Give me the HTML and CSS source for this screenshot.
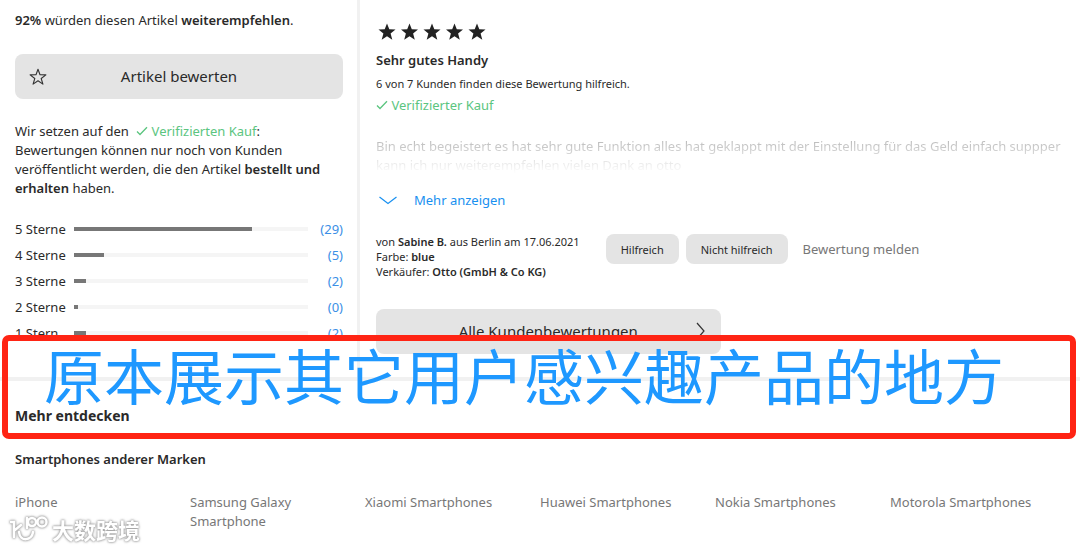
FILE: index.html
```html
<!DOCTYPE html>
<html lang="de">
<head>
<meta charset="utf-8">
<meta name="viewport" content="width=device-width, initial-scale=1">
<title>Kundenbewertungen</title>
<link rel="stylesheet" href="styles.css">
</head>
<body>
<main class="page">
  <div class="reviews">
    <section class="summary">
      <p><b>92%</b> würden diesen Artikel <b>weiterempfehlen</b>.</p>
      <button class="button rate" type="button">
        <svg class="rate-icon" viewBox="0 0 18 18" width="18" height="18" fill="none" stroke="#333" stroke-width="1.1" stroke-linejoin="round"><path d="M9 1.2l2 5.5 5.9.2-4.7 3.6 1.7 5.6L9 12.8l-4.9 3.3 1.7-5.6L1.100 6.900 7 6.700z"/></svg>
        <span>Artikel bewerten</span>
      </button>
      <p class="notice">Wir setzen auf den <span class="verified inline"><svg class="check" viewBox="0 0 12 10" width="12" height="10"><path d="M1 5.500l3 3L11 1.200"/></svg> Verifizierten Kauf</span>: Bewertungen können nur noch von Kunden veröffentlicht werden, die den Artikel <b>bestellt und erhalten</b> haben.</p>
      <ul class="ratings">
        <li><span>5 Sterne</span><span class="track"><span class="fill" style="width:76%"></span></span><a href="#">(29)</a></li>
        <li><span>4 Sterne</span><span class="track"><span class="fill" style="width:13%"></span></span><a href="#">(5)</a></li>
        <li><span>3 Sterne</span><span class="track"><span class="fill" style="width:5%"></span></span><a href="#">(2)</a></li>
        <li><span>2 Sterne</span><span class="track"><span class="fill" style="width:1.500%"></span></span><a href="#">(0)</a></li>
        <li><span>1 Stern</span><span class="track"><span class="fill" style="width:5%"></span></span><a href="#">(2)</a></li>
      </ul>
    </section>
    <article class="review">
      <svg class="stars" viewBox="0 0 110 18" width="110" height="18" fill="#222" role="img" aria-label="5 Sterne">
        <defs><path id="star" d="M9 .5l2.300 5.800 6.200.3-4.900 3.900 1.700 6.200L9 13.200l-5.300 3.500 1.700-6.200L.5 6.600l6.200-.3z"/></defs>
        <use href="#star" x="2"/><use href="#star" x="24.500"/><use href="#star" x="47"/><use href="#star" x="69.500"/><use href="#star" x="92"/>
      </svg>
      <h2>Sehr gutes Handy</h2>
      <p class="small helpful">6 von 7 Kunden finden diese Bewertung hilfreich.</p>
      <p class="verified"><svg class="check" viewBox="0 0 12 10" width="12" height="10"><path d="M1 5.500l3 3L11 1.200"/></svg> Verifizierter Kauf</p>
      <p class="excerpt">Bin echt begeistert es hat sehr gute Funktion alles hat geklappt mit der Einstellung für das Geld einfach suppper kann ich nur weiterempfehlen vielen Dank an otto</p>
      <button class="more" type="button"><svg viewBox="0 0 18 9" width="18" height="9" fill="none" stroke="#1890f0" stroke-width="1.200"><path d="M.5 1L9 7.500 17.500 1"/></svg>Mehr anzeigen</button>
      <div class="meta">
        <p class="small author">von <b>Sabine B.</b> aus Berlin am 17.06.2021<br>Farbe: <b>blue</b><br>Verkäufer: <b>Otto (GmbH &amp; Co KG)</b></p>
        <div class="actions">
          <button class="button vote" type="button">Hilfreich</button>
          <button class="button vote" type="button">Nicht hilfreich</button>
          <a class="report" href="#">Bewertung melden</a>
        </div>
      </div>
      <button class="button all" type="button"><span>Alle Kundenbewertungen</span><svg class="all-icon" viewBox="0 0 9 18" width="9" height="18" fill="none" stroke="#333" stroke-width="1.200"><path d="M1 1l7 8-7 8"/></svg></button>
    </article>
  </div>
  <section class="discover">
    <h2 class="discover-title">Mehr entdecken</h2>
    <h3>Smartphones anderer Marken</h3>
    <nav class="brands">
      <a href="#">iPhone</a>
      <a href="#">Samsung Galaxy Smartphone</a>
      <a href="#">Xiaomi Smartphones</a>
      <a href="#">Huawei Smartphones</a>
      <a href="#">Nokia Smartphones</a>
      <a href="#">Motorola Smartphones</a>
    </nav>
  </section>
  <div class="callout" lang="zh">原本展示其它用户感兴趣产品的地方</div>
  <div class="watermark" lang="zh">
    <svg viewBox="0 0 40 28" width="40" height="28" fill="none" stroke="#fff" stroke-width="2.500" stroke-linecap="round"><path d="M2 7h3v15M6 15l6-5M10 17c1 10 13 9 14 0M18 3v10"/><circle cx="23" cy="7" r="4"/><circle cx="33" cy="7" r="4.500"/></svg>
    <span>大数跨境</span>
  </div>
</main>
</body>
</html>
```
FILE: styles.css
```css
* { box-sizing: border-box; }
body {
  margin: 0;
  background: #fff;
  color: #2a2a2a;
  font: 13px/19px "Noto Sans", "Noto Sans CJK SC", sans-serif;
}
p, h2, h3, ul { margin: 0; padding: 0; }
h2, h3 { font-size: 13px; line-height: 19px; font-weight: 600; }
b { font-weight: 600; }
a { color: inherit; text-decoration: none; }
button { font: inherit; color: inherit; border: 0; cursor: pointer; }
svg { flex: none; }

.page { position: relative; overflow: hidden; }
.reviews {
  display: grid;
  grid-template-columns: 1fr 2fr;
  border-bottom: 4px solid #f1f1f1;
}
.summary {
  padding: 11px 14px 31px 15px;
  border-right: 3px solid #f1f1f1;
}
.button { background: #e4e4e4; border-radius: 8px; }
.rate {
  position: relative;
  width: 100%;
  height: 45px;
  margin: 24px 0 23px;
  font-size: 15px;
}
.rate-icon { position: absolute; left: 14px; top: 14px; }
.verified { color: #5bc57f; }
.inline { margin-left: 4px; white-space: nowrap; }
.check { fill: none; stroke: #5bc57f; stroke-width: 1.3; }

.ratings { list-style: none; margin-top: 18px; }
.ratings li {
  display: grid;
  grid-template-columns: 52px 1fr 28px;
  column-gap: 7px;
  align-items: center;
  height: 26px;
}
.ratings li > a { color: #3b8fe6; text-align: right; }
.track { display: block; height: 4px; background: #f5f5f5; }
.fill { display: block; height: 4px; background: #777; }

.review { padding: 23px 15px 22px 16px; }
.stars { display: block; margin-bottom: 10px; }
.small { font-size: 11px; line-height: 15px; }
.helpful { margin: 6px 0 5px; }
.excerpt {
  margin-top: 22px;
  height: 38px;
  overflow: hidden;
  color: transparent;
  background: linear-gradient(#b4b4b4, #fff 96%);
  -webkit-background-clip: text;
  background-clip: text;
}
.more {
  display: flex;
  align-items: center;
  gap: 17px;
  margin-top: 16px;
  padding: 0 3px;
  background: none;
  color: #1890f0;
}
.meta { display: flex; gap: 26px; margin-top: 24px; }
.author { white-space: nowrap; }
.actions { display: flex; align-items: center; gap: 7px; height: 30px; }
.vote { height: 30px; padding: 0 15px; font-size: 11px; }
.report { margin-left: 8px; color: #777; }
.all {
  position: relative;
  width: 50%;
  height: 45px;
  margin-top: 30px;
  font-size: 15px;
}
.all-icon { position: absolute; right: 16px; top: 13px; }

.discover { padding: 24px 15px 19px; }
.discover-title { font-size: 14px; line-height: 21px; font-weight: 700; }
.discover h3 { margin: 24px 0; }
.brands { display: grid; grid-template-columns: repeat(6, 1fr); color: #777; }
.brands a { padding-right: 40px; }
.brands a:nth-child(n+3) { padding-right: 0; }

.callout {
  position: absolute;
  left: 2px;
  right: 4px;
  top: 335px;
  height: 104px;
  padding-left: 36px;
  border: 6px solid #ff2414;
  border-radius: 7px;
  color: #1e98ff;
  font: 60px/66px "Noto Sans CJK SC", sans-serif;
  white-space: nowrap;
}
.watermark {
  position: absolute;
  left: 9px;
  bottom: 6px;
  display: flex;
  align-items: center;
  gap: 3px;
  color: #fff;
  font: 700 22px/30px "Noto Sans CJK SC", sans-serif;
  filter: drop-shadow(0 0 1px #999) drop-shadow(0 0 1px #bbb);
}
```
